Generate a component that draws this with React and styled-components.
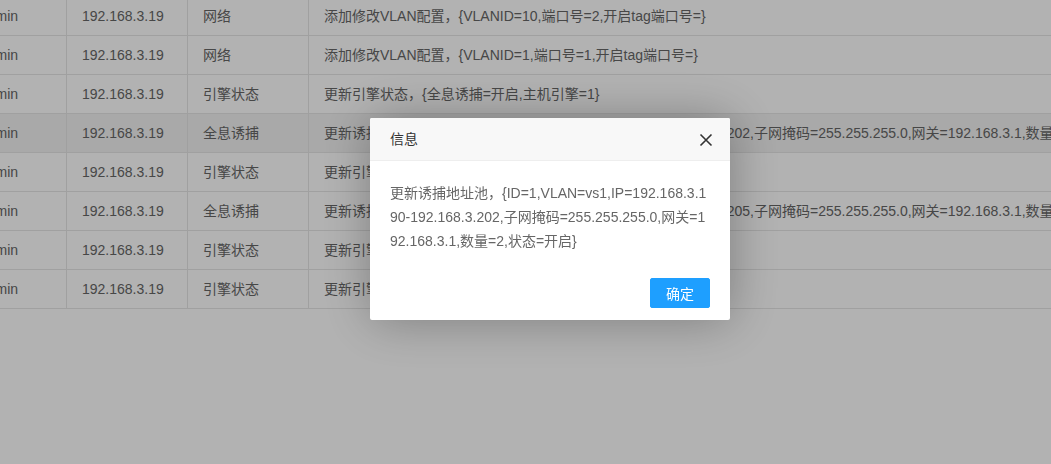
import React from "react";
import styled, { createGlobalStyle } from "styled-components";

const GlobalStyle = createGlobalStyle`
  html, body {
    margin: 0;
    padding: 0;
    background: #fff;
    overflow: hidden;
  }
  body {
    font-family: "Liberation Sans", Arial, "Noto Sans CJK SC", sans-serif;
    font-size: 14px;
    color: #666;
  }
`;

const rows = [
  { user: "admin", ip: "192.168.3.19", type: "网络", desc: "添加修改VLAN配置，{VLANID=10,端口号=2,开启tag端口号=}" },
  { user: "admin", ip: "192.168.3.19", type: "网络", desc: "添加修改VLAN配置，{VLANID=1,端口号=1,开启tag端口号=}" },
  { user: "admin", ip: "192.168.3.19", type: "引擎状态", desc: "更新引擎状态，{全息诱捕=开启,主机引擎=1}" },
  {
    user: "admin", ip: "192.168.3.19", type: "全息诱捕", hover: true,
    desc: "更新诱捕地址池，{ID=1,VLAN=vs1,IP=192.168.3.190-192.168.3.202,子网掩码=255.255.255.0,网关=192.168.3.1,数量=2,状态=开启}",
  },
  { user: "admin", ip: "192.168.3.19", type: "引擎状态", desc: "更新引擎状态，{全息诱捕=关闭,主机引擎=1}" },
  {
    user: "admin", ip: "192.168.3.19", type: "全息诱捕",
    desc: "更新诱捕地址池，{ID=2,VLAN=vs1,IP=192.168.3.203-192.168.3.205,子网掩码=255.255.255.0,网关=192.168.3.1,数量=3,状态=开启}",
  },
  { user: "admin", ip: "192.168.3.19", type: "引擎状态", desc: "更新引擎状态，{全息诱捕=开启,主机引擎=1}" },
  { user: "admin", ip: "192.168.3.19", type: "引擎状态", desc: "更新引擎状态，{全息诱捕=开启,主机引擎=0}" },
];

const App = () => {
  return (
    <>
      <GlobalStyle />
      <TableWrap>
        {rows.map((r, i) => (
          <Row key={i} $hover={r.hover}>
            <Cell $w={102}>{r.user}</Cell>
            <Cell $w={121}>{r.ip}</Cell>
            <Cell $w={121}>{r.type}</Cell>
            <Cell $grow>{r.desc}</Cell>
          </Row>
        ))}
      </TableWrap>

      <Shade />

      <Dialog>
        <DialogTitle>
          信息
          <CloseBtn aria-label="关闭">
            <svg width="14" height="14" viewBox="0 0 14 14">
              <path d="M1.5 1.5 L12.5 12.5 M12.5 1.5 L1.5 12.5" stroke="#333" strokeWidth="1.6" fill="none" />
            </svg>
          </CloseBtn>
        </DialogTitle>
        <DialogContent>
          更新诱捕地址池，{"{"}ID=1,VLAN=vs1,IP=192.168.3.190-192.168.3.202,子网掩码=255.255.255.0,网关=192.168.3.1,数量=2,状态=开启{"}"}
        </DialogContent>
        <DialogBtns>
          <OkBtn>确定</OkBtn>
        </DialogBtns>
      </Dialog>
    </>
  );
};

export default App;

// the table is scrolled: its header and first column start off-screen
const TableWrap = styled.div`
  margin: -3px 0 0 -35px;
  width: 1400px;
`;

const Row = styled.div`
  display: flex;
  border-bottom: 1px solid #e6e6e6;
  background: ${(p) => (p.$hover ? "#f2f2f2" : "#fff")};
`;

const Cell = styled.div`
  box-sizing: border-box;
  ${(p) => (p.$grow ? "flex: 1;" : `width: ${p.$w}px; flex: none;`)}
  border-right: 1px solid #e6e6e6;
  padding: 9px 15px;
  line-height: 20px;
  white-space: nowrap;
  overflow: hidden;
`;

const Shade = styled.div`
  position: fixed;
  inset: 0;
  background: rgba(0, 0, 0, 0.3);
`;

const Dialog = styled.div`
  position: fixed;
  top: 118px;
  left: 370px;
  width: 360px;
  background: #fff;
  border-radius: 2px;
  box-shadow: 1px 1px 50px rgba(0, 0, 0, 0.3);
`;

const DialogTitle = styled.div`
  position: relative;
  height: 42px;
  line-height: 42px;
  padding: 0 80px 0 20px;
  border-bottom: 1px solid #eee;
  background: #f8f8f8;
  border-radius: 2px 2px 0 0;
  color: #333;
  font-size: 14px;
`;

const CloseBtn = styled.span`
  position: absolute;
  right: 17px;
  top: 15px;
  width: 14px;
  height: 14px;
  display: flex;
  cursor: pointer;
`;

const DialogContent = styled.div`
  padding: 20px;
  line-height: 24px;
  word-break: break-all;
  color: #666;
  font-size: 14px;
`;

const DialogBtns = styled.div`
  display: flex;
  justify-content: flex-end;
  padding: 0 15px 12px;
`;

const OkBtn = styled.a`
  height: 30px;
  line-height: 30px;
  margin: 5px 5px 0;
  padding: 0 15px;
  border-radius: 2px;
  background: #1e9fff;
  border: 1px solid #1e9fff;
  color: #fff;
  font-size: 14px;
  box-sizing: border-box;
  width: 60px;
  text-align: center;
  cursor: pointer;
`;
